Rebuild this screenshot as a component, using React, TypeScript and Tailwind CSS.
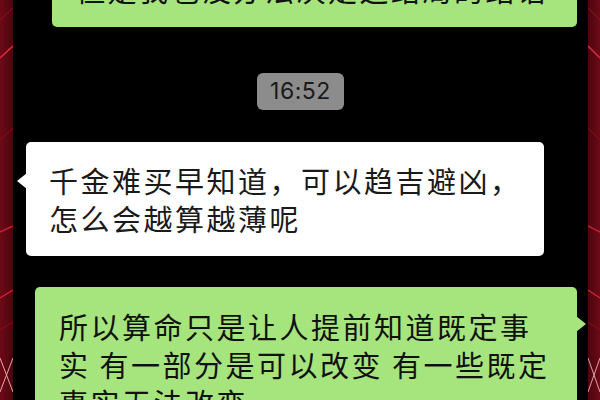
import React from "react";

function SideStrip({ side }: { side: "left" | "right" }) {
  const flip = side === "right";
  return (
    <div className="relative h-full w-full overflow-hidden bg-[#5a0811]">
      <svg
        width="100%"
        height="400"
        viewBox="0 0 13 400"
        preserveAspectRatio="none"
        className="absolute inset-0"
        style={flip ? { transform: "scaleX(-1)" } : undefined}
      >
        <defs>
          <linearGradient id={`g-${side}`} x1="0" y1="0" x2="1" y2="0">
            <stop offset="0" stopColor="#6e0a17" />
            <stop offset="1" stopColor="#48060d" />
          </linearGradient>
        </defs>
        <rect x="0" y="0" width="13" height="400" fill={`url(#g-${side})`} />
        <line x1="0" y1="20" x2="13" y2="8" stroke="#931224" strokeWidth="1" />
        <line x1="0" y1="58" x2="13" y2="46" stroke="#e42a3e" strokeWidth="1.6" />
        <line x1="0" y1="140" x2="13" y2="128" stroke="#861020" strokeWidth="1" />
        <line x1="0" y1="232" x2="13" y2="226" stroke="#cc1e32" strokeWidth="1.4" />
        <line x1="0" y1="298" x2="13" y2="290" stroke="#d82438" strokeWidth="1.4" />
        <line x1="0" y1="330" x2="13" y2="322" stroke="#861020" strokeWidth="1" />
        <line x1="0" y1="358" x2="13" y2="392" stroke="#eaa4ac" strokeWidth="1" />
        <line x1="0" y1="392" x2="13" y2="358" stroke="#eaa4ac" strokeWidth="1" />
      </svg>
    </div>
  );
}

export default function App() {
  const cjk = "font-['Noto_Sans_CJK_SC','Noto_Sans',sans-serif]";
  return (
    <div className="flex h-[400px] w-[600px] overflow-hidden bg-black">
      <div className="h-full w-[13px] shrink-0">
        <SideStrip side="left" />
      </div>
      <div className="flex flex-1 flex-col bg-black">
        {/* top outgoing bubble (cut off) */}
        <div className="ml-[39px] mr-[11px] mt-[-49px] rounded-[5px] bg-[#a6e47d] py-[19px] pl-[24px] pr-[10px]">
          <p
            className={`${cjk} whitespace-nowrap text-[29px] leading-[38px] tracking-[2.5px] text-[#111]`}
          >
            但是我也没办法决定这结局的结语
          </p>
        </div>

        {/* timestamp */}
        <div className="mt-[46px] flex justify-center">
          <div className="flex h-[37px] w-[87px] items-center justify-center rounded-[6px] bg-[#8c8c8c] font-['Inter',sans-serif] text-[23px] tracking-[0.5px] text-[#1a1a1a]">
            16:52
          </div>
        </div>

        {/* incoming white bubble */}
        <div className="relative ml-[13px] mt-[32px] w-[518px] rounded-[5px] bg-white py-[19px] pl-[23px] pr-[10px]">
          <span className="absolute left-[-9px] top-[31px] h-0 w-0 border-y-[8px] border-r-[10px] border-y-transparent border-r-white" />
          <p
            className={`${cjk} whitespace-nowrap text-[29px] leading-[38px] tracking-[2.5px] text-[#1a1a1a]`}
          >
            千金难买早知道，可以趋吉避凶，
            <br />
            怎么会越算越薄呢
          </p>
        </div>

        {/* outgoing green bubble */}
        <div className="relative ml-[22px] mr-[11px] mt-[31px] rounded-[5px] bg-[#a6e47d] pb-[19px] pl-[24px] pr-[10px] pt-[20px]">
          <span className="absolute right-[-9px] top-[29px] h-0 w-0 border-y-[8px] border-l-[10px] border-y-transparent border-l-[#a6e47d]" />
          <p
            className={`${cjk} whitespace-nowrap text-[29px] leading-[38px] tracking-[2.5px] text-[#111]`}
          >
            所以算命只是让人提前知道既定事
            <br />
            实 有一部分是可以改变 有一些既定
            <br />
            事实无法改变
          </p>
        </div>
      </div>
      <div className="h-full w-[12px] shrink-0">
        <SideStrip side="right" />
      </div>
    </div>
  );
}
